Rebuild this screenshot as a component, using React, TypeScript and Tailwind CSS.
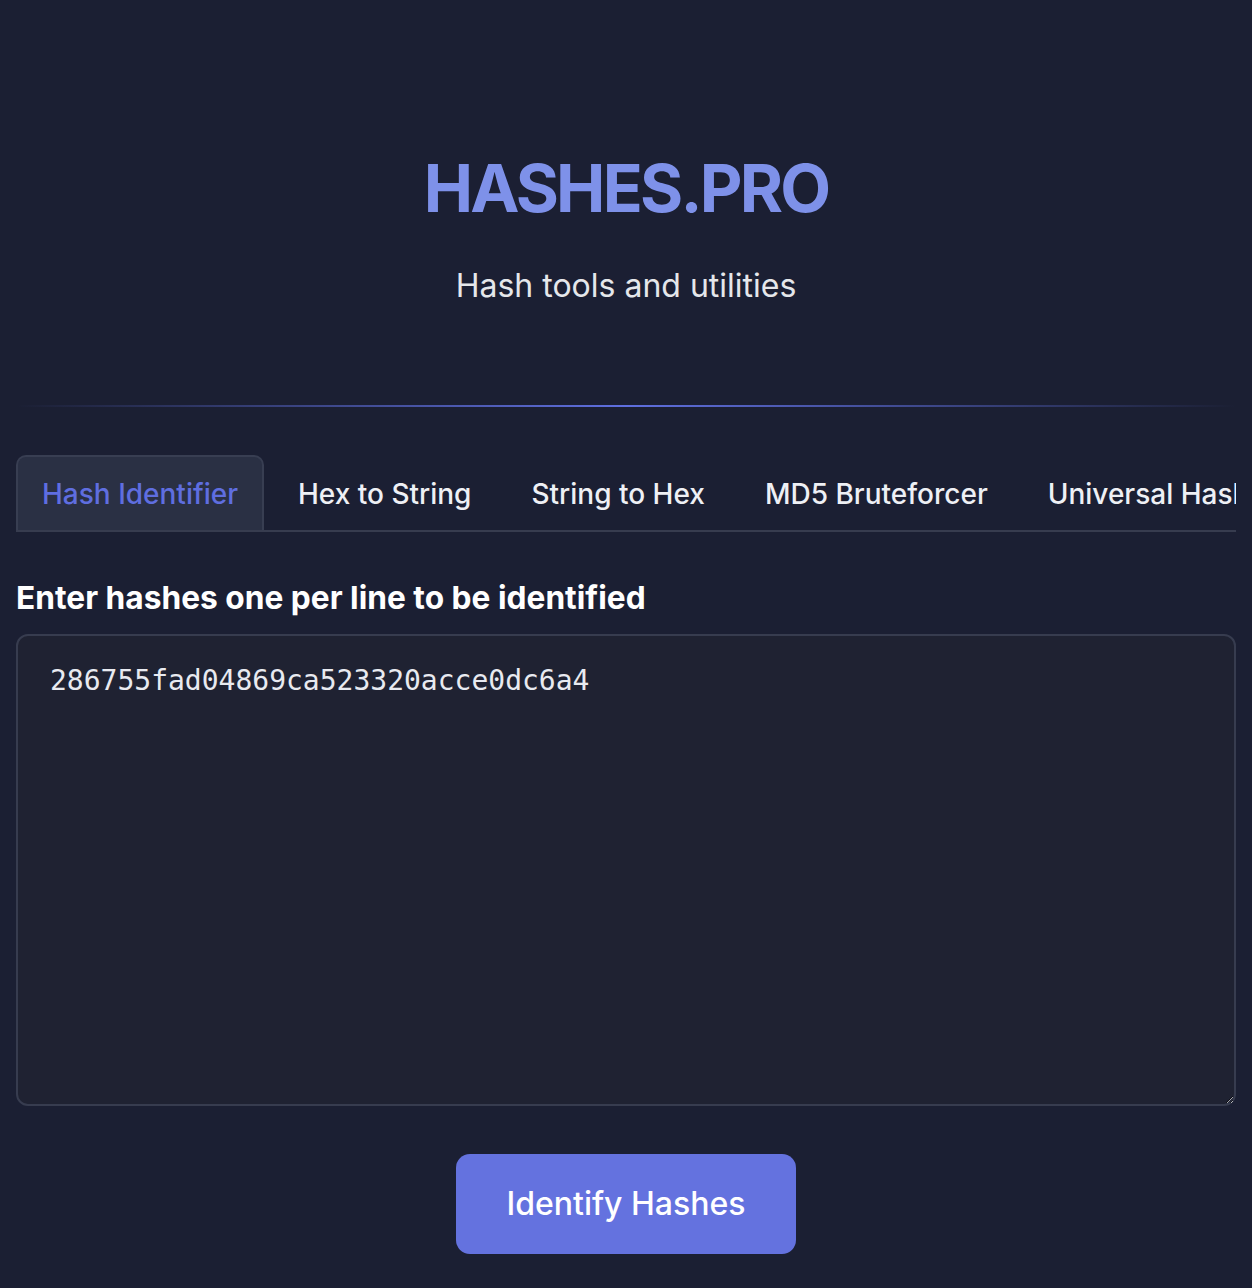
import React from "react";

const tabs = [
  "Hash Identifier",
  "Hex to String",
  "String to Hex",
  "MD5 Bruteforcer",
  "Universal Hash Generator",
];

const App = () => {
  const [active, setActive] = React.useState(0);
  const [value, setValue] = React.useState("286755fad04869ca523320acce0dc6a4");

  return (
    <div
      className="min-h-screen bg-[#1b1f33] text-[#e8eaf0]"
      style={{ fontFamily: "Inter, 'Noto Sans', sans-serif" }}
    >
      <div className="mx-auto w-full px-4">
        {/* Header */}
        <header className="pt-[148px] pb-[99px] text-center">
          <h1 className="text-[66px] leading-[80px] font-bold tracking-[-0.042em] text-[#7e91e9]">
            HASHES.PRO
          </h1>
          <p className="mt-[38px] text-[32px] leading-[40px] text-[#e5e7eb]">
            Hash tools and utilities
          </p>
        </header>

        {/* Divider */}
        <div className="h-[2px] w-full bg-gradient-to-r from-transparent via-[#5f6fe0] to-transparent" />

        {/* Tabs */}
        <nav className="mt-[48px] flex gap-2 overflow-hidden border-b-2 border-[#373c4f]">
          {tabs.map((tab, i) => (
            <button
              key={tab}
              onClick={() => setActive(i)}
              className={
                i === active
                  ? "-mb-[2px] shrink-0 whitespace-nowrap rounded-t-[10px] border-2 border-b-0 border-[#383e52] bg-[#2a3044] px-[24px] pt-[18px] pb-[19px] text-[28px] leading-[38px] font-medium text-[#5f6ee0]"
                  : "shrink-0 whitespace-nowrap px-[26px] pt-[20px] pb-[17px] text-[28px] leading-[38px] font-medium text-[#eef0f5]"
              }
            >
              {tab}
            </button>
          ))}
        </nav>

        {/* Input */}
        <section className="mt-[46px]">
          <label className="block text-[31.7px] leading-[40px] font-bold text-white">
            Enter hashes one per line to be identified
          </label>
          <textarea
            value={value}
            onChange={(e) => setValue(e.target.value)}
            spellCheck={false}
            className="mt-[16px] block h-[472px] w-full resize-y rounded-[12px] border-2 border-[#373c4f] bg-[#1f2232] px-[32px] py-[24px] text-[28px] leading-[42px] text-[#e8eaf0] outline-none"
            style={{ fontFamily: "'DejaVu Sans Mono', monospace" }}
          />
        </section>

        <div className="mt-[48px] flex justify-center pb-[40px]">
          <button className="h-[100px] w-[340px] rounded-[14px] bg-[#6472df] text-[32px] font-medium text-white">
            Identify Hashes
          </button>
        </div>
      </div>
    </div>
  );
};

export default App;
